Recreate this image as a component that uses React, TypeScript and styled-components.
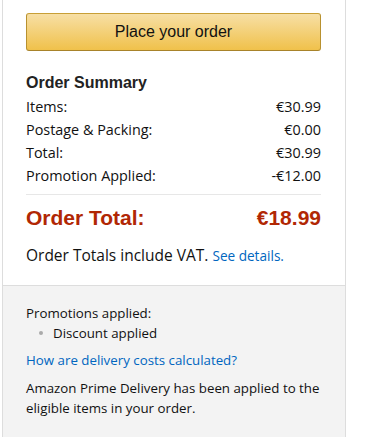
import React from "react";
import styled, { createGlobalStyle } from "styled-components";

const Global = createGlobalStyle`
  html, body { margin: 0; padding: 0; background: #fff; }
  body { font-family: "Open Sans", "Noto Sans", Arial, sans-serif; color: #111; }
`;

const Panel = styled.div`
  margin-left: 2px;
  width: 342px;
  border-left: 1px solid #ddd;
  border-right: 1px solid #ddd;
  height: 437px;
  display: flex;
  flex-direction: column;
`;

const Top = styled.div`
  padding: 13px 24px 19px 23px;
`;

const OrderButton = styled.button`
  display: block;
  width: 100%;
  height: 38px;
  box-sizing: border-box;
  border: 1px solid;
  border-color: #c89f36 #b8912f #a8832a;
  border-radius: 3px;
  background: linear-gradient(to bottom, #f7dfa5, #f0c14b);
  font-family: "Liberation Sans", Arial, sans-serif;
  font-size: 16px;
  color: #111;
  padding: 0;
  cursor: pointer;
`;

const Heading = styled.h3`
  margin: 22px 0 2px;
  font-family: "Liberation Sans", Arial, sans-serif;
  font-size: 16px;
  font-weight: 700;
  line-height: 20px;
  color: #222;
`;

const Row = styled.div`
  display: flex;
  justify-content: space-between;
  font-size: 14.4px;
  line-height: 23px;
  color: #111;
`;

const Divider = styled.div`
  height: 1px;
  background: #e7e7e7;
  margin-top: 7px;
`;

const TotalRow = styled.div`
  display: flex;
  justify-content: space-between;
  margin-top: 11px;
  font-family: "Liberation Sans", Arial, sans-serif;
  font-weight: 700;
  font-size: 21px;
  line-height: 24px;
  color: #b12704;
`;

const Note = styled.div`
  margin-top: 15px;
  font-size: 15.5px;
  line-height: 20px;
`;

const Link = styled.a<{ $size: number }>`
  color: #0066c0;
  text-decoration: none;
  font-size: ${(p) => p.$size}px;
`;

const Bottom = styled.div`
  flex: 1;
  background: #f3f3f3;
  border-top: 1px solid #ddd;
  padding: 17px 24px 0 23px;
  font-size: 13.3px;
  line-height: 20px;
`;

const List = styled.ul`
  margin: 0;
  padding: 0 0 0 27px;
  list-style: none;
`;

const Item = styled.li`
  position: relative;
  &::before {
    content: "";
    position: absolute;
    left: -14px;
    top: 8px;
    width: 4px;
    height: 4px;
    border-radius: 50%;
    background: #aaa;
  }
`;

const Para = styled.p<{ $gap: number }>`
  margin: ${(p) => p.$gap}px 0 0;
`;

const rows: [string, string][] = [
  ["Items:", "€30.99"],
  ["Postage & Packing:", "€0.00"],
  ["Total:", "€30.99"],
  ["Promotion Applied:", "-€12.00"],
];

export default function App() {
  return (
    <>
      <Global />
      <Panel>
        <Top>
          <OrderButton>Place your order</OrderButton>
          <Heading>Order Summary</Heading>
          {rows.map(([l, v]) => (
            <Row key={l}>
              <span>{l}</span>
              <span>{v}</span>
            </Row>
          ))}
          <Divider />
          <TotalRow>
            <span>Order Total:</span>
            <span>€18.99</span>
          </TotalRow>
          <Note>
            Order Totals include VAT. <Link $size={13.6} href="#">See details.</Link>
          </Note>
        </Top>
        <Bottom>
          <div>Promotions applied:</div>
          <List>
            <Item>Discount applied</Item>
          </List>
          <Para $gap={7}>
            <Link $size={13.3} href="#">How are delivery costs calculated?</Link>
          </Para>
          <Para $gap={8}>
            Amazon Prime Delivery has been applied to the eligible items in your order.
          </Para>
        </Bottom>
      </Panel>
    </>
  );
}
